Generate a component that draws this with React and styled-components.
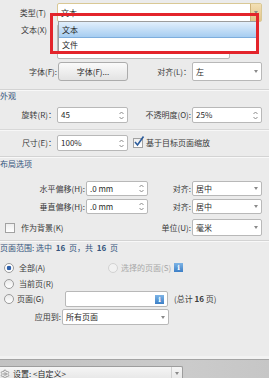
import React from "react";
import styled, { createGlobalStyle } from "styled-components";
import { Settings } from "lucide-react";

const GlobalStyle = createGlobalStyle`
  html, body {
    margin: 0;
    padding: 0;
    background: #ebebeb;
  }
  body {
    font-family: "Noto Sans CJK SC", "Noto Sans", sans-serif;
    font-size: 8px;
    color: #333;
    overflow: hidden;
  }
`;

const SpinIcon = () => (
  <svg width="5" height="9" viewBox="0 0 5 9">
    <path d="M0.5 3 L2.5 1 L4.5 3 M0.5 6 L2.5 8 L4.5 6" fill="none" stroke="#8a8a8a" strokeWidth="1" />
  </svg>
);

const CheckMark = () => (
  <svg width="12" height="12" viewBox="0 0 12 12">
    <path d="M2 6 L4.5 9 L10.5 0.5" fill="none" stroke="#2c5c9c" strokeWidth="1.6" />
  </svg>
);

const App = () => {
  return (
    <Dialog>
      <GlobalStyle />

      <TopArea>
        <Row $h={19}>
          <Label $w={57} $pr={11}>类型(T)</Label>
          <Field $w={205} $focus>
            <Value>文本</Value>
            <HoverArrow>
              <Arrow />
            </HoverArrow>
          </Field>
        </Row>
        <Row $h={35} $mt={2} $top>
          <Label $w={57} $pr={10} $pt={2}>文本(X)</Label>
          <Field $w={173} />
        </Row>
        <Row $h={19} $mt={3}>
          <Label $w={58}>字体(F):</Label>
          <Button $w={70}>字体(F)...</Button>
          <Label $w={64}>对齐(L)：</Label>
          <Field $w={70}>
            <Value>左</Value>
            <Arrow />
          </Field>
        </Row>

        <DropList>
          <Option $active>文本</Option>
          <Option>文件</Option>
        </DropList>
        <Marker />
      </TopArea>

      <SectionHead $h={12}>外观</SectionHead>
      <Row $h={16} $mt={5}>
        <Label $w={57}>旋转(R)：</Label>
        <Field $w={71}>
          <Value>45</Value>
          <SpinIcon />
        </Field>
        <Label $w={64}>不透明度(O):</Label>
        <Field $w={70}>
          <Value>25%</Value>
          <SpinIcon />
        </Field>
      </Row>
      <Divider />
      <Row $h={16} $mt={4}>
        <Label $w={57}>尺寸(E)：</Label>
        <Field $w={71}>
          <Value>100%</Value>
          <SpinIcon />
        </Field>
        <Check $ml={5}>
          <CheckMark />
        </Check>
        <Text $ml={3}>基于目标页面缩放</Text>
      </Row>

      <SectionHead $h={13} $mt={5}>布局选项</SectionHead>
      <Row $h={15} $mt={11}>
        <Label $w={86}>水平偏移(H):</Label>
        <Field $w={62}>
          <Value>.0 mm</Value>
          <SpinIcon />
        </Field>
        <Label $w={44}>对齐:</Label>
        <Field $w={70}>
          <Value>居中</Value>
          <Arrow />
        </Field>
      </Row>
      <Row $h={15} $mt={3}>
        <Label $w={86}>垂直偏移(H):</Label>
        <Field $w={62}>
          <Value>.0 mm</Value>
          <SpinIcon />
        </Field>
        <Label $w={44}>对齐:</Label>
        <Field $w={70}>
          <Value>居中</Value>
          <Arrow />
        </Field>
      </Row>
      <Row $h={17} $mt={5}>
        <Check $ml={5} />
        <Text $ml={6}>作为背景(K)</Text>
        <Label $grow>单位(U):</Label>
        <Field $w={70}>
          <Value>毫米</Value>
          <Arrow />
        </Field>
      </Row>

      <SectionHead $h={14} $mt={4}>
        页面范围: 选中 <b>16</b> 页，共 <b>16</b> 页
      </SectionHead>
      <Row $h={15} $mt={5}>
        <Choice $w={108}>
          <Radio $checked />
          <Text $ml={5}>全部(A)</Text>
        </Choice>
        <Radio $disabled />
        <Text $ml={3} $muted>选择的页面(S)</Text>
        <Info $ml={3}>i</Info>
      </Row>
      <Row $h={14} $mt={2}>
        <Choice $w={65}>
          <Radio />
          <Text $ml={5}>当前页(R)</Text>
        </Choice>
      </Row>
      <Row $h={16}>
        <Choice $w={65}>
          <Radio />
          <Text $ml={3}>页面(G)</Text>
        </Choice>
        <Field $w={103}>
          <Value />
          <Info>i</Info>
        </Field>
        <Text $ml={6}>
          (总计 <b>16</b> 页)
        </Text>
      </Row>
      <Row $h={16} $mt={2}>
        <Label $w={62}>应用到:</Label>
        <Field $w={107}>
          <Value>所有页面</Value>
          <Arrow />
        </Field>
      </Row>

      <Footer>
        <PresetSelect>
          <Settings size={10} color="#777" strokeWidth={1.5} />
          <Value $ml={3}>设置: &lt;自定义&gt;</Value>
          <ArrowCell>
            <Arrow />
          </ArrowCell>
        </PresetSelect>
      </Footer>
    </Dialog>
  );
};

export default App;

const Dialog = styled.div`
  width: 269px;
  height: 378px;
  overflow: hidden;
  display: flex;
  flex-direction: column;
  background: #ebebeb;
`;

const TopArea = styled.div`
  position: relative;
  padding: 3px 0 8px;
`;

const Row = styled.div`
  display: flex;
  align-items: ${(p) => (p.$top ? "flex-start" : "center")};
  height: ${(p) => p.$h}px;
  margin-top: ${(p) => p.$mt || 0}px;
  padding-right: 7px;
  flex: none;
`;

const Label = styled.span`
  width: ${(p) => (p.$w ? `${p.$w}px` : "auto")};
  flex: ${(p) => (p.$grow ? 1 : "none")};
  padding-right: ${(p) => p.$pr ?? 1}px;
  padding-top: ${(p) => p.$pt || 0}px;
  box-sizing: border-box;
  text-align: right;
  white-space: nowrap;
  line-height: 1;
  color: #3a3a3a;
`;

const Text = styled.span`
  margin-left: ${(p) => p.$ml || 0}px;
  white-space: nowrap;
  line-height: 1;
  color: ${(p) => (p.$muted ? "#a8a8a8" : "#3a3a3a")};
`;

const Field = styled.div`
  width: ${(p) => p.$w}px;
  height: 100%;
  flex: none;
  box-sizing: border-box;
  display: flex;
  align-items: center;
  padding: 0 3px 0 3px;
  background: #fff;
  border: 1px solid ${(p) => (p.$focus ? "#d9c894" : "#b8b8b8")};
  border-radius: 2px;
  position: relative;
`;

const Value = styled.span`
  flex: 1;
  margin-left: ${(p) => p.$ml || 0}px;
  white-space: nowrap;
  line-height: 1;
  color: #2a2a2a;
`;

const Arrow = styled.span`
  width: 0;
  height: 0;
  border-left: 2.5px solid transparent;
  border-right: 2.5px solid transparent;
  border-top: 3px solid #8a8a8a;
`;

const HoverArrow = styled.span`
  align-self: stretch;
  width: 10px;
  margin-right: -3px;
  display: flex;
  align-items: center;
  justify-content: center;
  background: linear-gradient(#f3dfb4, #e2c58a);
  border-left: 1px solid #cfb278;
`;

const Button = styled.div`
  width: ${(p) => p.$w}px;
  height: 100%;
  flex: none;
  box-sizing: border-box;
  display: flex;
  align-items: center;
  justify-content: center;
  background: linear-gradient(#fafafa, #e3e3e3);
  border: 1px solid #acacac;
  border-radius: 3px;
  color: #2a2a2a;
`;

const DropList = styled.div`
  position: absolute;
  left: 58px;
  top: 21px;
  width: 200px;
  height: 32px;
  box-sizing: border-box;
  background: #fff;
  border: 1px solid #9c9c9c;
  display: flex;
  flex-direction: column;
`;

const Option = styled.div`
  height: 15px;
  display: flex;
  align-items: center;
  padding-left: 3px;
  color: #1f1f1f;
  background: ${(p) => (p.$active ? "linear-gradient(#e2effc, #a6cdf1)" : "transparent")};
  border-bottom: ${(p) => (p.$active ? "1px solid #7eaedd" : "0")};
`;

const Marker = styled.div`
  position: absolute;
  left: 50px;
  top: 13px;
  width: 209px;
  height: 41px;
  box-sizing: border-box;
  border: 3px solid #e3242b;
`;

const SectionHead = styled.div`
  height: ${(p) => p.$h}px;
  margin-top: ${(p) => p.$mt || 0}px;
  flex: none;
  display: flex;
  align-items: center;
  white-space: pre;
  border-top: 1px solid #d3d3d3;
  box-shadow: inset 0 1px 0 #f8f8f8;
  color: #34547c;
  line-height: 1;

  b {
    font-weight: 700;
    margin: 0 2px;
  }
`;

const Divider = styled.div`
  margin-top: 6px;
  flex: none;
  border-top: 1px solid #d8d8d8;
  border-bottom: 1px solid #f7f7f7;
`;

const Check = styled.span`
  width: 10px;
  height: 10px;
  flex: none;
  box-sizing: border-box;
  margin-left: ${(p) => p.$ml || 0}px;
  border: 1px solid #a2a2a2;
  background: linear-gradient(#eeeeee, #ffffff);
  position: relative;

  svg {
    position: absolute;
    left: -1px;
    top: -3px;
  }
`;

const Choice = styled.div`
  width: ${(p) => p.$w}px;
  flex: none;
  display: flex;
  align-items: center;
  padding-left: 4px;
  box-sizing: border-box;
`;

const Radio = styled.span`
  width: 10px;
  height: 10px;
  flex: none;
  box-sizing: border-box;
  border-radius: 50%;
  border: 1px solid ${(p) => (p.$disabled ? "#d2d2d2" : "#9b9b9b")};
  background: ${(p) =>
    p.$checked
      ? "radial-gradient(circle, #2e5fa9 0 2px, #ffffff 2.6px)"
      : p.$disabled
      ? "#f1f1f1"
      : "linear-gradient(#e9e9e9, #ffffff)"};
`;

const Info = styled.span`
  width: 9px;
  height: 9px;
  flex: none;
  margin-left: ${(p) => p.$ml || 0}px;
  display: flex;
  align-items: center;
  justify-content: center;
  background: linear-gradient(#7db4e6, #3d7fc6);
  color: #fff;
  font-family: "DejaVu Serif", serif;
  font-weight: 700;
  font-size: 7px;
  line-height: 1;
`;

const Footer = styled.div`
  margin-top: auto;
  height: 19px;
  flex: none;
  padding-top: 6px;
  box-sizing: border-box;
  border-top: 1px solid #a4a4a4;
  box-shadow: 0 -3px 0 #f2f2f2;
  background: linear-gradient(90deg, #c2c2c2, #cbcbcb 70%, #c6c6c6);
`;

const PresetSelect = styled.div`
  width: 185px;
  height: 14px;
  margin-left: -2px;
  box-sizing: border-box;
  display: flex;
  align-items: center;
  padding-left: 1px;
  background: linear-gradient(#f5f5f5, #e6e6e6);
  border: 1px solid #9d9d9d;
  border-bottom: 0;
  border-radius: 2px 2px 0 0;
`;

const ArrowCell = styled.span`
  align-self: stretch;
  width: 10px;
  display: flex;
  align-items: center;
  justify-content: center;
  border-left: 1px solid #d0d0d0;
`;
